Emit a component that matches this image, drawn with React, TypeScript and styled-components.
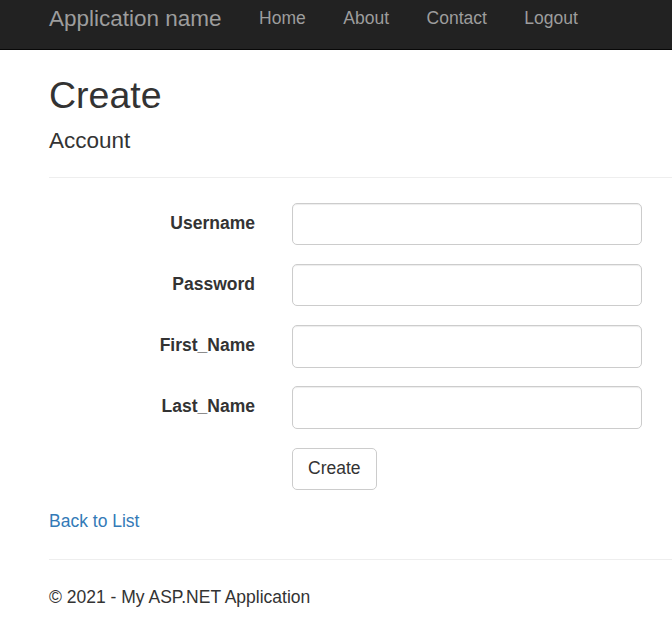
import React from "react";
import styled, { createGlobalStyle } from "styled-components";

const Global = createGlobalStyle`
  html, body { margin: 0; padding: 0; background: #fff; overflow: hidden; }
  body {
    font-family: "Liberation Sans", Arial, Helvetica, sans-serif;
    font-size: 17.5px;
    line-height: 25px;
    color: #333;
  }
  * { box-sizing: border-box; }
`;

const Navbar = styled.nav`
  height: 50px;
  background: #222;
  border-bottom: 1px solid #080808;
  display: flex;
  align-items: flex-start;
  padding: 6px 0 0 49px;
`;

const Brand = styled.a`
  font-size: 22.5px;
  line-height: 25px;
  color: #9d9d9d;
  text-decoration: none;
  padding-right: 18.75px;
`;

const NavLink = styled.a`
  font-size: 17.5px;
  line-height: 25px;
  color: #9d9d9d;
  text-decoration: none;
  padding: 0 18.75px;
`;

const Body = styled.div`
  padding-left: 49px;
`;

const H2 = styled.h2`
  font-size: 37.5px;
  font-weight: 500;
  line-height: 41.25px;
  margin: 25px 0 12.5px;
`;

const H4 = styled.h4`
  font-size: 22.5px;
  font-weight: 500;
  line-height: 24.75px;
  margin: 11.5px 0 23px;
`;

const Rule = styled.hr`
  border: 0;
  border-top: 1px solid #eee;
  margin: 0 0 25px;
`;

const Form = styled.form`
  display: grid;
  grid-template-columns: 206px 350px;
  column-gap: 37px;
  row-gap: 18.75px;
`;

const Label = styled.label`
  font-weight: 700;
  text-align: right;
  padding-top: 8px;
`;

const Input = styled.input`
  height: 42.5px;
  width: 350px;
  border: 1px solid #ccc;
  border-radius: 5px;
  box-shadow: inset 0 1px 1px rgba(0, 0, 0, 0.075);
  font: inherit;
  padding: 7.5px 15px;
`;

const Button = styled.button`
  justify-self: start;
  height: 42.5px;
  background: #fff;
  border: 1px solid #ccc;
  border-radius: 5px;
  color: #333;
  font: inherit;
  padding: 7.5px 15px;
`;

const BackLink = styled.a`
  display: block;
  margin-top: 18.75px;
  color: #337ab7;
  text-decoration: none;
  line-height: 25px;
`;

const Footer = styled.footer`
  margin-top: 25px;
`;

const FooterText = styled.p`
  margin: 0 0 12.5px;
`;

const fields = ["Username", "Password", "First_Name", "Last_Name"];

export default function App() {
  return (
    <>
      <Global />
      <Navbar>
        <Brand href="#">Application name</Brand>
        <NavLink href="#">Home</NavLink>
        <NavLink href="#">About</NavLink>
        <NavLink href="#">Contact</NavLink>
        <NavLink href="#">Logout</NavLink>
      </Navbar>
      <Body>
        <H2>Create</H2>
        <H4>Account</H4>
        <Rule />
        <Form onSubmit={(e) => e.preventDefault()}>
          {fields.map((f) => (
            <React.Fragment key={f}>
              <Label htmlFor={f}>{f}</Label>
              <Input id={f} type={f === "Password" ? "password" : "text"} />
            </React.Fragment>
          ))}
          <span />
          <Button type="submit">Create</Button>
        </Form>
        <BackLink href="#">Back to List</BackLink>
        <Footer>
          <Rule />
          <FooterText>© 2021 - My ASP.NET Application</FooterText>
        </Footer>
      </Body>
    </>
  );
}
